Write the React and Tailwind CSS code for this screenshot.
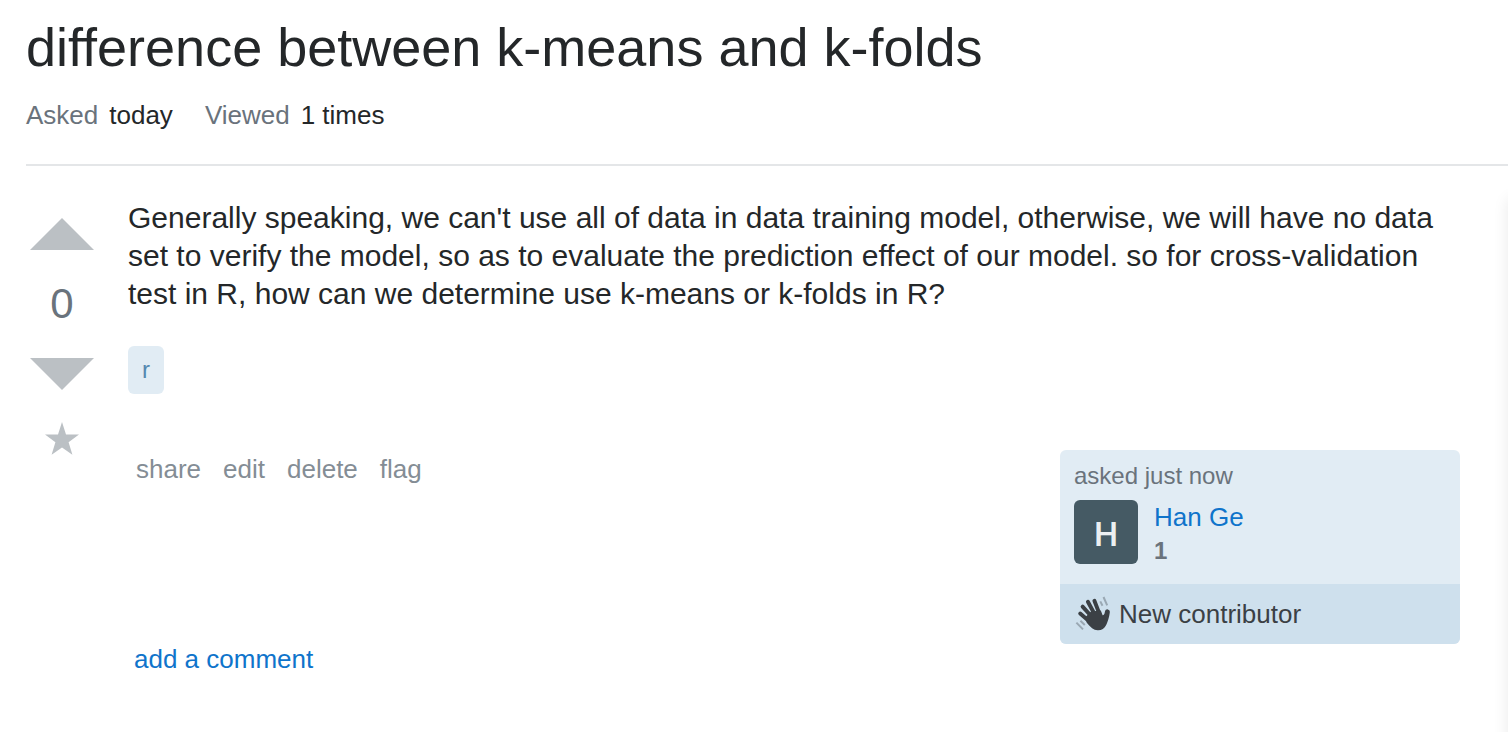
const menuItems = ["share", "edit", "delete", "flag"];

function WaveIcon() {
  return (
    <svg viewBox="0 0 36 36" className="h-9 w-9 shrink-0" aria-hidden="true">
      <g fill="none" stroke="#9aa8b3" strokeWidth="2">
        <path d="M28.5 1 32.2 9.4M25.3 5.4l2.2 4.4M1.4 26.6l6.6 6.8M5.4 24.8l4.4 4.2" />
      </g>
      <g fill="none" stroke="#3b4045" strokeWidth="3.9" strokeLinecap="round">
        <path d="M5.2 17.6 15 26M7.6 10.6 17 21M12.9 5.8 19.5 18M19.4 4.8 24.5 18" />
      </g>
      <path
        fill="#3b4045"
        d="M10.5 21 16 15.5 25.8 14.5 27.6 19.2C28.6 19.4 29.3 18.6 29.8 16.2 30.3 13.8 31.5 13.2 32.8 13.4 34.4 13.7 35 15 34.8 16.6 34.2 21.4 32.8 25.6 31.2 29 29.4 32.6 26.4 34.4 22.6 34.2 18.6 34 15.6 31.2 11.6 26.4Z"
      />
    </svg>
  );
}

function VoteCell() {
  return (
    <div className="flex w-[72px] shrink-0 flex-col items-center pt-[19px] text-[#bbc0c4]">
      <button type="button" aria-label="Up vote">
        <svg viewBox="0 0 64 32" className="block h-8 w-16" fill="currentColor">
          <path d="M0 32h64L32 0z" />
        </svg>
      </button>
      <div className="my-7 text-[42px] leading-[52px] text-[#6a737c]">0</div>
      <button type="button" aria-label="Down vote">
        <svg viewBox="0 0 64 32" className="block h-8 w-16" fill="currentColor">
          <path d="M0 0h64L32 32z" />
        </svg>
      </button>
      <button type="button" aria-label="Favorite" className="mt-8">
        <svg viewBox="0 0 34 34" className="block h-[34px] w-[34px]" fill="currentColor">
          <path d="M17 0 21 12.4H34L23.6 20.2 27.4 32.8 17 25.4 6.6 32.8 10.4 20.2 0 12.4H13z" />
        </svg>
      </button>
    </div>
  );
}

function UserCard() {
  return (
    <div className="w-[400px] shrink-0 overflow-hidden rounded-md bg-[#e1ecf4]">
      <div className="px-3.5 pt-3 pb-4">
        <div className="text-2xl leading-7 text-[#6a737c]">asked just now</div>
        <div className="mt-2.5 flex gap-4">
          <a
            href="#user"
            aria-label="Han Ge profile"
            className="flex h-16 w-16 items-center justify-center rounded-md bg-[#455a64] pt-1 font-['Roboto',sans-serif] text-[34px] font-medium text-[#eceff1]"
          >
            H
          </a>
          <div>
            <a href="#user" className="block text-[26px] leading-[34px] text-[#0f74cb]">
              Han Ge
            </a>
            <div className="text-2xl leading-[34px] font-bold text-[#6a737c]">1</div>
          </div>
        </div>
      </div>
      <div className="flex h-[60px] items-center gap-2 bg-[#cee0ed] px-[15px] text-[26px] text-[#3b4045]">
        <WaveIcon />
        New contributor
      </div>
    </div>
  );
}

export default function App() {
  return (
    <div className="flex min-h-screen flex-col overflow-hidden bg-white pl-[26px] font-['Liberation_Sans',Arial,sans-serif] text-[#242729]">
      <header className="border-b-2 border-[#e4e6e8] pt-[11px] pb-[33px]">
        <h1 className="text-[54px] leading-[72px]">difference between k-means and k-folds</h1>
        <div className="mt-4 flex gap-8 text-[26px] leading-8">
          <div className="flex gap-[11px]">
            <span className="text-[#6a737c]">Asked</span>
            <time>today</time>
          </div>
          <div className="flex gap-[11px]">
            <span className="text-[#6a737c]">Viewed</span>
            <span>1 times</span>
          </div>
        </div>
      </header>
      <div className="flex grow pt-[33px]">
        <main className="flex min-w-0 flex-1 gap-[30px] pr-12">
          <VoteCell />
          <div className="min-w-0 flex-1">
            <p className="text-[30px] leading-[38px]">
              Generally speaking, we can't use all of data in data training model, otherwise, we
              will have no data set to verify the model, so as to evaluate the prediction effect of
              our model. so for cross-validation test in R, how can we determine use k-means or
              k-folds in R?
            </p>
            <div className="mt-[33px] flex">
              <a
                href="#r"
                className="rounded-md bg-[#e1ecf4] px-3.5 text-2xl leading-[48px] text-[#5488b0]"
              >
                r
              </a>
            </div>
            <div className="mt-14 flex items-start justify-between">
              <nav className="flex gap-[22px] pt-[3px] pl-2 text-[26px] leading-8 text-[#848d95]">
                {menuItems.map((item) => (
                  <a key={item} href={`#${item}`}>
                    {item}
                  </a>
                ))}
              </nav>
              <UserCard />
            </div>
            <a href="#comment" className="ml-1.5 block w-fit text-[26px] leading-[30px] text-[#0f74cb]">
              add a comment
            </a>
          </div>
        </main>
        <aside className="-mr-4 -mb-8 w-4 shrink-0 bg-white shadow-[0_0_16px_rgba(0,0,0,0.09)]" />
      </div>
    </div>
  );
}
